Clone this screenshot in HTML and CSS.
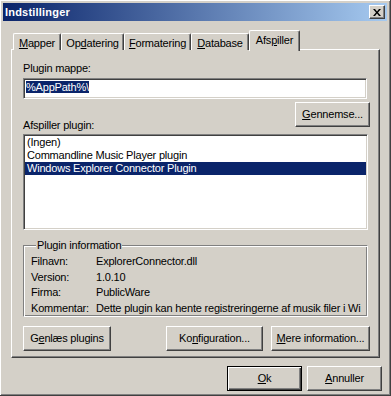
FILE: index.html
```html
<!DOCTYPE html>
<html lang="da">
<head>
    <meta charset="UTF-8">
    <title>Indstillinger</title>
    <link rel="stylesheet" href="styles.css">
</head>
<body>
    <div class="window">
        <div class="titlebar">
            <span class="title">Indstillinger</span>
            <span class="close">
                <svg width="8" height="7" viewBox="0 0 8 7"><path d="M0 0h2l2 2.5L6 0h2L5 3.5 8 7H6L4 4.5 2 7H0l3-3.5z" fill="#000"/></svg>
            </span>
        </div>
        <div class="client">
            <div class="tabs">
                <div class="tab tab-mapper"><u>M</u>apper</div>
                <div class="tab tab-opd">Op<u>d</u>atering</div>
                <div class="tab tab-form"><u>F</u>ormatering</div>
                <div class="tab tab-db"><u>D</u>atabase</div>
                <div class="tab tab-active">Afs<u>p</u>iller</div>
            </div>
            <div class="panel">
                <div class="label">Plugin mappe:</div>
                <div class="edit"><span class="sel">%AppPath%\</span></div>
                <div class="browse-row">
                    <div class="label label-list">Afspiller plugin:</div>
                    <button class="btn btn-browse"><u>G</u>ennemse...</button>
                </div>
                <div class="list">
                    <div class="item">(Ingen)</div>
                    <div class="item">Commandline Music Player plugin</div>
                    <div class="item selected">Windows Explorer Connector Plugin</div>
                </div>
                <fieldset class="group">
                    <legend>Plugin information</legend>
                    <div class="info">
                        <span>Filnavn:</span><span>ExplorerConnector.dll</span>
                        <span>Version:</span><span>1.0.10</span>
                        <span>Firma:</span><span>PublicWare</span>
                        <span>Kommentar:</span><span>Dette plugin kan hente registreringerne af musik filer i Wi</span>
                    </div>
                </fieldset>
                <div class="actions">
                    <button class="btn btn-reload">G<u>e</u>nlæs plugins</button>
                    <button class="btn btn-config">Ko<u>n</u>figuration...</button>
                    <button class="btn btn-more"><u>M</u>ere information...</button>
                </div>
            </div>
            <div class="dialog-buttons">
                <button class="btn btn-default"><u>O</u>k</button>
                <button class="btn"><u>A</u>nnuller</button>
            </div>
        </div>
    </div>
</body>
</html>
```

FILE: styles.css
```css
*{
    box-sizing: border-box;
}
body{
    margin: 0;
    background: #d4d0c8;
    font-family: 'Liberation Sans', Arial, sans-serif;
    font-size: 11px;
    line-height: 13px;
    letter-spacing: -0.2px;
    color: #000;
    overflow: hidden;
}
u{
    text-decoration: underline;
    text-underline-offset: 1px;
}

/* vindue */
.window{
    margin: -1px 0 0 -1px;
    width: 392px;
    height: 397px;
    padding: 3px;
    background: #d4d0c8;
    border: 1px solid;
    border-color: #d4d0c8 #404040 #404040 #d4d0c8;
    box-shadow: inset 1px 1px #fff, inset -1px -1px #808080;
}
.titlebar{
    height: 18px;
    padding: 0 2px 0 2px;
    display: flex;
    align-items: center;
    justify-content: space-between;
    background: linear-gradient(to right, #0a246a, #a6caf0);
    color: #fff;
    font-weight: bold;
    letter-spacing: 0.2px;
}
.close{
    width: 16px;
    height: 14px;
    display: flex;
    align-items: center;
    justify-content: center;
    background: #d4d0c8;
    border: 1px solid;
    border-color: #fff #404040 #404040 #fff;
    box-shadow: inset -1px -1px #808080;
}
.client{
    padding: 9px 0 0 8px;
}

/* faneblade */
.tabs{
    height: 20px;
    padding-left: 2px;
    display: flex;
    align-items: flex-end;
    position: relative;
    z-index: 1;
}
.tab{
    height: 17px;
    padding-top: 3px;
    text-align: center;
    border-top: 1px solid #fff;
    border-left: 1px solid #fff;
    border-right: 1px solid #404040;
    box-shadow: inset -1px 0 #808080;
    border-radius: 2px 2px 0 0;
    background: #d4d0c8;
}
.tab-mapper{ width: 48px; }
.tab-opd{ width: 63px; }
.tab-form{ width: 67px; }
.tab-db{ width: 58px; }
.tab-active{
    width: 51px;
    height: 21px;
    margin-bottom: -1px;
}

.panel{
    width: 369px;
    height: 309px;
    margin-top: -1px;
    padding: 12px 9px 0 11px;
    border: 1px solid;
    border-color: #fff #404040 #404040 #fff;
    box-shadow: inset -1px -1px #808080;
}
.label{
    height: 13px;
}
.edit{
    height: 21px;
    margin: 3px 3px 0 0;
    padding: 2px 2px;
    background: #fff;
    border: 1px solid;
    border-color: #808080 #fff #fff #808080;
    box-shadow: inset 1px 1px #404040, inset -1px -1px #d4d0c8;
}
.sel{
    background: #0a246a;
    color: #fff;
}
.browse-row{
    display: flex;
    justify-content: space-between;
    align-items: flex-start;
    margin-top: 3px;
}
.label-list{
    margin-top: 17px;
}
.btn{
    height: 25px;
    padding: 0;
    font: inherit;
    letter-spacing: inherit;
    color: #000;
    background: #d4d0c8;
    border: 1px solid;
    border-color: #fff #404040 #404040 #fff;
    box-shadow: inset -1px -1px #808080;
    text-align: center;
}
.btn-browse{ width: 75px; }
.btn-default{
    border-color: #000;
    box-shadow: inset 1px 1px #fff, inset -1px -1px #404040, inset -2px -2px #808080;
}

.list{
    height: 96px;
    margin: 2px 2px 0 0;
    padding: 1px;
    background: #fff;
    border: 1px solid;
    border-color: #808080 #fff #fff #808080;
    box-shadow: inset 1px 1px #404040, inset -1px -1px #d4d0c8;
}
.item{
    padding-left: 2px;
    white-space: nowrap;
}
.item.selected{
    background: #0a246a;
    color: #fff;
}

/* plugin information */
.group{
    height: 78px;
    margin: 9px 2px 0 0;
    padding: 2px 4px 0 7px;
    min-width: 0;
    border: 1px solid;
    border-color: #808080 #fff #fff #808080;
    box-shadow: inset 1px 1px #fff, inset -1px -1px #808080;
}
.group legend{
    padding: 0 1px;
    margin-left: 5px;
    background: #d4d0c8;
}
.info{
    display: grid;
    grid-template-columns: 65px 1fr;
    grid-auto-rows: 15.6px;
    align-items: center;
}
.info span{
    white-space: nowrap;
}

.actions{
    display: flex;
    margin-top: 9px;
}
.btn-reload{ width: 88px; }
.btn-config{ width: 97px; margin-left: auto; }
.btn-more{ width: 99px; margin-left: 8px; }

.dialog-buttons{
    display: flex;
    justify-content: flex-end;
    gap: 5px;
    margin-top: 8px;
    padding-right: 5px;
}
.dialog-buttons .btn{
    width: 75px;
}
```
